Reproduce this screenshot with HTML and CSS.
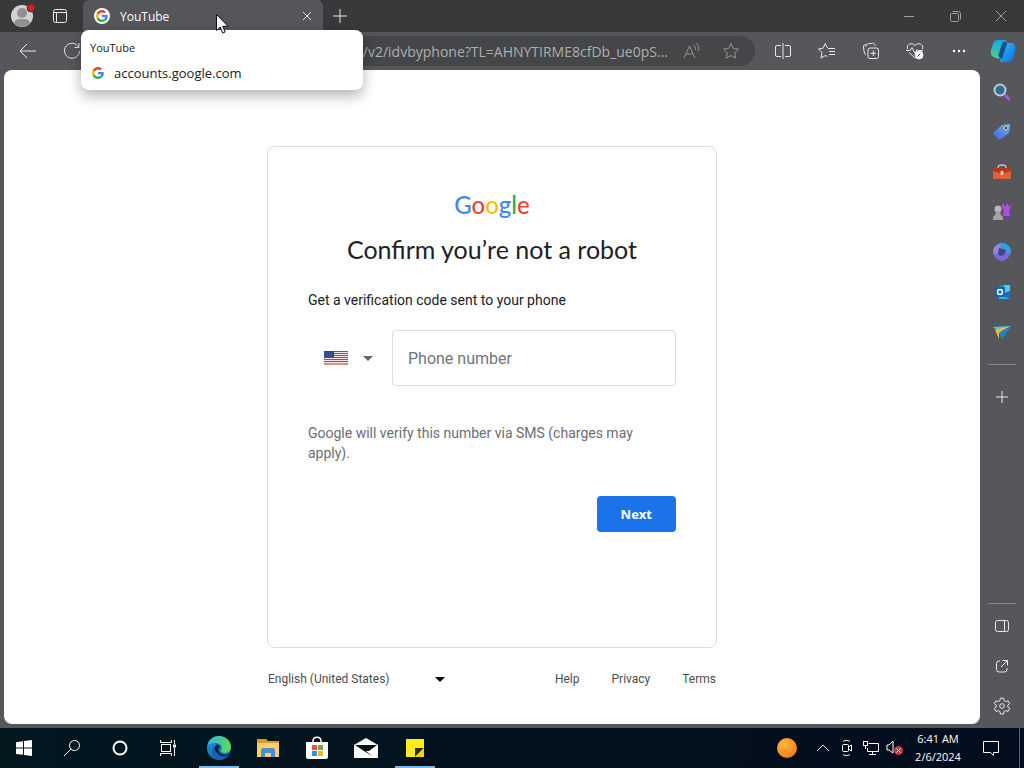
FILE: index.html
```html
<!DOCTYPE html>
<html lang="en">
<head>
  <meta charset="UTF-8">
  <title>YouTube</title>
  <meta name="viewport" content="width=device-width, initial-scale=1.0">
  <link rel="stylesheet" href="styles.css">
</head>
<body>

  <svg class="defs" aria-hidden="true">
    <defs>
      <symbol id="g-icon" viewBox="0 0 48 48">
        <path fill="#EA4335" d="M24 9.5c3.54 0 6.71 1.22 9.21 3.6l6.85-6.85C35.9 2.38 30.47 0 24 0 14.62 0 6.51 5.38 2.56 13.22l7.98 6.19C12.43 13.72 17.74 9.5 24 9.5z"/>
        <path fill="#4285F4" d="M46.98 24.55c0-1.57-.15-3.09-.38-4.55H24v9.02h12.94c-.58 2.96-2.26 5.48-4.78 7.18l7.73 6c4.51-4.18 7.09-10.36 7.09-17.65z"/>
        <path fill="#FBBC05" d="M10.53 28.59c-.48-1.45-.76-2.99-.76-4.59s.27-3.14.76-4.59l-7.98-6.19C.92 16.46 0 20.12 0 24c0 3.88.92 7.54 2.56 10.78l7.97-6.19z"/>
        <path fill="#34A853" d="M24 48c6.48 0 11.93-2.13 15.89-5.81l-7.73-6c-2.15 1.45-4.92 2.3-8.16 2.3-6.26 0-11.57-4.22-13.47-9.91l-7.98 6.19C6.51 42.62 14.62 48 24 48z"/>
      </symbol>
      <linearGradient id="edge-blue" x1="0" y1="0" x2="1" y2="1"><stop offset="0" stop-color="#1b9de2"/><stop offset="1" stop-color="#0c4f9e"/></linearGradient>
      <linearGradient id="edge-green" x1="0" y1="0" x2="1" y2="0"><stop offset="0" stop-color="#2fb4e8"/><stop offset="1" stop-color="#62d94e"/></linearGradient>
      <linearGradient id="co-left" x1="0" y1="0" x2="0" y2="1"><stop offset="0" stop-color="#19a5ea"/><stop offset="1" stop-color="#4ed08b"/></linearGradient>
      <linearGradient id="co-right" x1="0" y1="0" x2="1" y2="1"><stop offset="0" stop-color="#2cc3f6"/><stop offset="1" stop-color="#1267e4"/></linearGradient>
      <linearGradient id="tag-fill" x1="0" y1="1" x2="1" y2="0"><stop offset="0" stop-color="#3c62d8"/><stop offset="1" stop-color="#74b3ff"/></linearGradient>
      <radialGradient id="sun" cx=".35" cy=".3" r=".8"><stop offset="0" stop-color="#ffb640"/><stop offset="1" stop-color="#f07a16"/></radialGradient>
    </defs>
  </svg>

  <!-- tab strip -->
  <header class="titlebar">
    <button class="profile" aria-label="Profile">
      <svg width="28" height="26" viewBox="0 0 28 26">
        <circle cx="12" cy="13" r="11" fill="#d3d2d0"/>
        <circle cx="12" cy="10" r="5" fill="#918f8f"/>
        <path d="M4 20c1-4 4-4 8-4s7 0 8 4c-4 5-12 5-16 0z" fill="#918f8f"/>
        <circle cx="21" cy="5" r="4" fill="#e01b1b" stroke="#38393b"/>
      </svg>
    </button>
    <button class="workspaces" aria-label="Tab actions">
      <svg class="line" width="16" height="16" viewBox="0 0 16 16"><rect x="1.500" y="1.500" width="13" height="13" rx="2"/><path d="M2 4.500h12M4.500 4.500v10"/></svg>
    </button>
    <div class="tab">
      <span class="favicon"><svg width="12" height="12"><use href="#g-icon"/></svg></span>
      <span class="tab-title">YouTube</span>
      <button class="tab-close" aria-label="Close tab">
        <svg class="line" width="10" height="10" viewBox="0 0 10 10"><path d="M1 1l8 8M9 1l-8 8"/></svg>
      </button>
    </div>
    <button class="new-tab" aria-label="New tab">
      <svg class="line" width="14" height="14" viewBox="0 0 14 14"><path d="M7 0v14M0 7h14"/></svg>
    </button>
    <div class="window-buttons">
      <button aria-label="Minimize"><svg class="line" width="10" height="10" viewBox="0 0 10 10"><path d="M0 5.500h10"/></svg></button>
      <button aria-label="Restore"><svg class="line" width="11" height="11" viewBox="0 0 11 11"><rect x=".5" y="2.500" width="8" height="8" rx="1"/><path d="M2.500 .5h6a2 2 0 0 1 2 2v6"/></svg></button>
      <button aria-label="Close"><svg class="line" width="12" height="12" viewBox="0 0 12 12"><path d="M1 1l10 10M11 1L1 11"/></svg></button>
    </div>
  </header>

  <!-- toolbar -->
  <nav class="toolbar">
    <button aria-label="Back"><svg class="line" width="18" height="16" viewBox="0 0 18 16"><path d="M17 8H1.500M8 1L1 8l7 7"/></svg></button>
    <button aria-label="Refresh"><svg class="line" width="18" height="18" viewBox="0 0 18 18"><path d="M15.500 5A7.500 7.500 0 1 0 16.500 9M16 1v4.500h-4.500"/></svg></button>
    <div class="address">
      <input type="text" aria-label="Address" value="up/v2/idvbyphone?TL=AHNYTIRME8cfDb_ue0pS...">
      <button aria-label="Read aloud"><svg class="line" width="18" height="16" viewBox="0 0 18 16"><path d="M1 15L6.500 3 12 15M3 11h7M10.500 2c1.500 1 2 2.500 2 5M13 0c2.500 2 3.500 5 2.500 8"/></svg></button>
      <button aria-label="Add to favorites"><svg class="line" width="18" height="18" viewBox="0 0 18 18"><path d="M9 1.500l2.300 4.900 5.200.7-3.800 3.700 1 5.300L9 13.500l-4.700 2.600 1-5.300L1.500 7.100l5.200-.7z"/></svg></button>
    </div>
    <button aria-label="Split screen"><svg class="line" width="16" height="16" viewBox="0 0 16 16"><path d="M8 0v16M6 2.500H2a1.500 1.500 0 0 0-1.500 1.500v8A1.500 1.500 0 0 0 2 13.500h4M10 2.500h4a1.500 1.500 0 0 1 1.500 1.500v8a1.500 1.500 0 0 1-1.500 1.500h-4"/></svg></button>
    <button aria-label="Favorites"><svg class="line" width="18" height="18" viewBox="0 0 18 18"><path d="M10 6.500h7M11 9.500h6M11 12.500h6M9.500 6L7.200 1.500 5.200 6.200l-4.700.7L4 10.500l-1 5.500 4.500-2.500 2 1"/></svg></button>
    <button aria-label="Collections"><svg class="line" width="18" height="18" viewBox="0 0 18 18"><rect x="6" y="6" width="10.500" height="10.500" rx="2"/><path d="M11.300 8.500v5.500M8.500 11.300H14M4 12.500C2 12 2.500 10 2 9L1.500 5C1.300 3.500 2 3 3 3l1-.3M4 5c-.2-1.700 0-2.500 1.500-3l5-.8c1.500-.2 2.200.7 2.500 2L13.300 4"/></svg></button>
    <button aria-label="Browser essentials"><svg class="line" width="18" height="18" viewBox="0 0 18 18"><path d="M1.500 7C0 2 6 0 9 3.500 12 0 18 2 16.500 7M0 8.500h4l2-3 3 6 2-4 1 1h5M3 10.500l6 5.500"/><circle cx="13" cy="13" r="4" fill="#fff"/><path class="check" d="M11.500 14.500l3-3"/></svg></button>
    <button aria-label="Settings and more"><svg width="14" height="4" viewBox="0 0 14 4" fill="#fff"><circle cx="2" cy="2" r="1.200"/><circle cx="7" cy="2" r="1.200"/><circle cx="12" cy="2" r="1.200"/></svg></button>
    <button class="copilot" aria-label="Copilot"><svg width="26" height="24" viewBox="0 0 26 24"><path d="M8 1h7c2 0 1 1 0 5l-3 10c-1 3-3 4-6 3C2 18 0 15 1 11L3 5c1-3 2-4 5-4z" fill="url(#co-left)"/><path d="M18 4h3c4 0 5 4 4 8l-2 7c-1 3-2 4-5 4h-7c-2 0-1-2 0-5l3-10c1-3 2-4 4-4z" fill="url(#co-right)"/><path d="M14 2l3 3-5 15-4-3 4-12z" fill="#184f8c"/></svg></button>
  </nav>

  <div class="tooltip" role="tooltip">
    <div class="tooltip-title">YouTube</div>
    <div class="tooltip-site"><svg width="12" height="12"><use href="#g-icon"/></svg>accounts.google.com</div>
  </div>

  <div class="window">
    <main class="page">
      <form class="card" onsubmit="return false">
        <div class="logo" aria-label="Google"><span class="blue">G</span><span class="red">o</span><span class="yellow">o</span><span class="blue">g</span><span class="green">l</span><span class="red">e</span></div>
        <h1>Confirm you’re not a robot</h1>
        <p class="lead">Get a verification code sent to your phone</p>
        <div class="phone">
          <div class="country">
            <svg width="24" height="14" viewBox="0 0 24 14">
              <rect width="24" height="14" fill="#f3e6ea"/>
              <path d="M0 .5h24M0 2.500h24M0 4.500h24M0 6.500h24M0 8.500h24M0 10.500h24M0 13h24" stroke="#c8354d"/>
              <rect width="10" height="7" fill="#31477f"/>
              <path d="M1 2h8M1 4h8M1 6h8" stroke="#7181aa" stroke-width=".6" stroke-dasharray="1 1"/>
            </svg>
            <svg width="10" height="5" viewBox="0 0 10 5" fill="#5f6368"><path d="M0 0h10L5 5z"/></svg>
            <select aria-label="Country"><option value="us"></option></select>
          </div>
          <input type="tel" aria-label="Phone number" placeholder="Phone number">
        </div>
        <p class="note">Google will verify this number via SMS (charges may apply).</p>
        <button class="next" type="submit">Next</button>
      </form>
      <footer class="footer">
        <div class="language">
          <select aria-label="Language"><option>English (United States)</option></select>
          <svg width="10" height="5" viewBox="0 0 10 5"><path d="M0 0h10L5 5z"/></svg>
        </div>
        <div class="links">
          <a href="#">Help</a>
          <a href="#">Privacy</a>
          <a href="#">Terms</a>
        </div>
      </footer>
    </main>

    <aside class="sidebar">
      <button aria-label="Search"><svg width="20" height="20" viewBox="0 0 20 20"><path d="M11 11l6 6" stroke="#a958d8" stroke-width="3" stroke-linecap="round"/><circle cx="8" cy="8" r="5.500" fill="#2d6e91" stroke="#b9cdd8" stroke-width="2"/></svg></button>
      <button aria-label="Shopping"><svg width="20" height="20" viewBox="0 0 20 20"><path d="M10 3l7-1c1 0 1 1 1 2l-1 7-8 6c-1 1-2 1-3 0l-4-4c-1-1-1-2 0-3z" fill="url(#tag-fill)"/><circle cx="14" cy="6" r="1.800" fill="#26456f" stroke="#e4d667"/></svg></button>
      <button aria-label="Tools"><svg width="20" height="20" viewBox="0 0 20 20"><path d="M6 7c0-4 1-4 4-4s4 0 4 4" fill="none" stroke="#c8c8c8" stroke-width="1.500"/><rect x="1" y="6" width="18" height="11" rx="1.500" fill="#e0603a"/><path d="M1 9l9 3 9-3V6H1z" fill="#b93725"/><rect x="8.500" y="9" width="3" height="4" rx="1" fill="#f4c8a0"/></svg></button>
      <button aria-label="Games"><svg width="20" height="20" viewBox="0 0 20 20"><path d="M10 2h2v2h2V2h2v2h2V2h1l-1 5-1 1 1 6h-7l1-6-2-2z" fill="#ad4be3"/><path d="M12 14h7v2h-8z" fill="#7b31b5"/><circle cx="6" cy="7" r="3.500" fill="#b8b7b6"/><path d="M4 9h4c0 3 1 4 3 6v3H1v-3c2-2 3-3 3-6z" fill="#a4a3a2"/></svg></button>
      <button aria-label="Microsoft 365"><svg width="20" height="20" viewBox="0 0 20 20"><path d="M10 1C5 1 1 5 1 10c0 1 0 2 1 3l9-3z" fill="#8f86dc"/><path d="M8 1c6-1 11 4 11 9l-1 3-8-4z" fill="#2f9fe8"/><path d="M1 11c3 2 8 1 10-4l7 5c-1 4-5 7-9 7-4-1-7-4-8-8z" fill="#7a6bd6"/><path d="M7 6l7 2-2 5-4 1-2-2z" fill="#3f4682"/></svg></button>
      <button aria-label="Outlook"><svg width="20" height="20" viewBox="0 0 20 20"><rect x="7" y="3" width="11" height="14" rx="1" fill="#1683ce"/><path d="M12 3h6v7h-6z" fill="#51c8ef"/><path d="M7 12l11-3v8H7z" fill="#39acea"/><path d="M18 9v8l-9-4z" fill="#1b6bb7"/><rect x="3" y="5" width="10" height="10" rx="1" fill="#0768b7"/><circle cx="8" cy="10" r="2.500" fill="none" stroke="#fff" stroke-width="1.500"/></svg></button>
      <button aria-label="Drop"><svg width="20" height="20" viewBox="0 0 20 20"><path d="M1 5l18-1-9 13-3-7z" fill="#258bd1"/><path d="M1 5l18-1-12 6z" fill="#55c0dc"/><path d="M3 8l14-4-10 7v6z" fill="#f3b936"/><path d="M8 10l11-6-9 13z" fill="#1686cf"/></svg></button>
      <hr>
      <button aria-label="Customize"><svg class="line" width="12" height="12" viewBox="0 0 12 12"><path d="M6 0v12M0 6h12"/></svg></button>
      <hr class="before-tools">
      <button aria-label="Hide sidebar"><svg class="line" width="14" height="12" viewBox="0 0 14 12"><rect x=".5" y=".5" width="13" height="11" rx="2"/><path d="M9.500 1v10"/></svg></button>
      <button aria-label="Open link"><svg class="line" width="14" height="14" viewBox="0 0 14 14"><path d="M5 2H4a2.500 2.500 0 0 0-2.500 2.500v6A2.500 2.500 0 0 0 4 13h5.500a2.500 2.500 0 0 0 2.500-2.500V9M7.500 1.500h5v5M12.500 1.500L6 8"/></svg></button>
      <button aria-label="Settings"><svg class="line" width="18" height="18" viewBox="0 0 18 18"><path d="M7.400 1.200h3.200l.5 2.500 1.600.9 2.400-.8 1.600 2.800-1.900 1.600v1.800l1.900 1.600-1.600 2.800-2.400-.8-1.600.9-.5 2.500H7.400l-.5-2.500-1.600-.9-2.400.8-1.600-2.800L3.200 10V8.200L1.300 6.600l1.600-2.800 2.400.8 1.600-.9z"/><circle cx="9" cy="9" r="2.300"/></svg></button>
    </aside>
  </div>

  <!-- desktop taskbar -->
  <div class="taskbar">
    <button aria-label="Start"><svg width="16" height="16" viewBox="0 0 16 16" fill="#fff"><path d="M0 2.200L7 1.300v6.300H0zM8 1.100L16 0v7.600H8zM0 8.500h7v6.300l-7-.9zM8 8.500h8V16l-8-1.100z"/></svg></button>
    <button aria-label="Search"><svg class="line" width="18" height="18" viewBox="0 0 18 18"><circle cx="11.500" cy="6.500" r="5"/><path d="M8 10l-7 7"/></svg></button>
    <button aria-label="Cortana"><svg width="16" height="16" viewBox="0 0 16 16"><circle cx="8" cy="8" r="6.500" fill="none" stroke="#fff" stroke-width="2"/></svg></button>
    <button aria-label="Task view"><svg class="line" width="17" height="16" viewBox="0 0 17 16"><rect x="1.500" y="4.500" width="9" height="7"/><path d="M.5 0v2.500h11V0M.5 16v-2.500h11V16M14.500 0v4M14.500 8v8"/><rect x="13.500" y="5" width="2" height="2" fill="#fff"/></svg></button>
    <div class="apps">
      <button class="running" aria-label="Microsoft Edge"><svg width="26" height="26" viewBox="0 0 26 26"><circle cx="13" cy="13" r="12" fill="url(#edge-blue)"/><path d="M1.500 10C3 4 8 1 13 1c7 0 12 5 12 11 0 4-3 6-6 6-3 0-5-1-4-3 2-3 0-7-5-7-4 0-7 1-8.500 2z" fill="url(#edge-green)"/><path d="M10 10c-3 3-2 10 4 12 4 1 7 0 9-3-3 2-8 1-10-2-1-2-1-4 1-5-1-2-2-3-4-2z" fill="#06213a"/><path d="M8 11c-4 6-1 12 5 14 4 0 8-2 10-5-4 2-8 2-11-1s-4-5-4-8z" fill="#1360b5"/></svg></button>
      <button aria-label="File Explorer"><svg width="22" height="20" viewBox="0 0 22 20"><path d="M0 1h9l2 2h11v5H0z" fill="#dc9a29"/><path d="M0 5h22v14H0z" fill="#f5cf70"/><path d="M4 19v-7c0-1 1-2 2-2h10c1 0 2 1 2 2v7h-4v-4H8v4z" fill="#4b91c9"/></svg></button>
      <button aria-label="Microsoft Store"><svg width="24" height="24" viewBox="0 0 24 24"><path d="M8 7V5c0-5 8-5 8 0v2" fill="none" stroke="#fff" stroke-width="1.500"/><path d="M1 6h22v15c0 1-1 2-2 2H3c-1 0-2-1-2-2z" fill="#fff"/><path d="M7 9h5v5H7z" fill="#ef5435"/><path d="M13 9h5v5h-5z" fill="#6fae35"/><path d="M7 15h5v5H7z" fill="#219bd8"/><path d="M13 15h5v5h-5z" fill="#f2b31c"/></svg></button>
      <button aria-label="Mail"><svg width="24" height="20" viewBox="0 0 24 20"><path d="M0 7l12-7 12 7v13H0z" fill="#fff"/><path d="M1 7h22l-8 6 3 5-8-5z" fill="#03131c"/><path d="M12 13l6 5-2-5z" fill="#fff"/></svg></button>
      <button class="running" aria-label="Sticky Notes"><svg width="20" height="20" viewBox="0 0 20 20"><path d="M1 1h18v18H1z" fill="#ffeb1c"/><path d="M10 10h9l-9 9z" fill="#302a14"/><path d="M19 10v9h-9z" fill="#f5d60c"/></svg></button>
    </div>
    <div class="tray">
      <svg class="weather" width="22" height="22" viewBox="0 0 22 22"><circle cx="11" cy="11" r="10" fill="url(#sun)"/></svg>
      <button aria-label="Show hidden icons"><svg class="line" width="12" height="8" viewBox="0 0 12 8"><path d="M0 7l6-6 6 6"/></svg></button>
      <button aria-label="Camera"><svg class="line" width="14" height="18" viewBox="0 0 14 18"><rect x="2.500" y="5.500" width="6" height="7" rx="1"/><path d="M8.500 8l3-2v6l-3-2M3 2.500c2-1.500 5-1.500 7 0M3 15.500c2 1.500 5 1.500 7 0"/></svg></button>
      <button aria-label="Network"><svg class="line" width="16" height="16" viewBox="0 0 16 16"><path d="M5.500 3.500h10v8h-11V8M9.500 11.500v3M6 14.500h7"/><rect x=".5" y="1.500" width="4" height="4"/><path d="M2.500 5.500V9"/></svg></button>
      <button aria-label="Volume muted"><svg width="18" height="16" viewBox="0 0 18 16"><path d="M1 5h2l4-4v12L3 10H1z" fill="none" stroke="#fff"/><circle cx="12.500" cy="10.500" r="4.500" fill="#cc3340"/><path d="M10.500 8.500l4 4M14.500 8.500l-4 4" stroke="#fff"/></svg></button>
      <button class="clock"><span>6:41 AM</span><span>2/6/2024</span></button>
      <button class="notifications" aria-label="Notifications"><svg class="line" width="18" height="18" viewBox="0 0 18 18"><path d="M1.500 2.500h15v11h-5v3l-3-3h-7z"/></svg></button>
    </div>
  </div>

  <svg class="cursor" width="13" height="20" viewBox="0 0 13 20"><path d="M.5 .5v16l3.700-3.500 2.500 6 2.500-1-2.500-5.700H12z" fill="#fff" stroke="#111"/></svg>

</body>
</html>
```

FILE: styles.css
```css
* {
  box-sizing: border-box;
}
body {
  margin: 0;
  min-height: 100vh;
  display: flex;
  flex-direction: column;
  background: #55575a;
  color: #202124;
  font-family: Roboto, sans-serif;
}
button {
  display: flex;
  align-items: center;
  justify-content: center;
  flex-shrink: 0;
  padding: 0;
  border: none;
  background: none;
  color: #fff;
  font: inherit;
  cursor: pointer;
}
svg {
  display: block;
  flex-shrink: 0;
}
.defs {
  position: absolute;
  width: 0;
  height: 0;
}
.line {
  fill: none;
  stroke: #e8e8e8;
}

/* tab strip */
.titlebar {
  display: flex;
  height: 32px;
  background: #38393b;
  font-family: "Open Sans", sans-serif;
}
.profile {
  width: 48px;
}
.workspaces {
  width: 24px;
}
.tab {
  display: flex;
  align-items: center;
  width: 240px;
  margin-left: 11px;
  padding: 0 11px;
  background: #55565a;
  border-radius: 6px 6px 0 0;
}
.favicon {
  padding: 2px;
  border-radius: 50%;
  background: #fff;
}
.tab-title {
  flex: 1;
  margin-left: 10px;
  color: #fff;
  font-size: 12px;
}
.tab-close {
  width: 10px;
}
.new-tab {
  width: 34px;
}
.window-buttons {
  display: flex;
  margin-left: auto;
}
.window-buttons button {
  width: 46px;
}
.window-buttons .line {
  stroke: #a0a0a2;
}

/* toolbar */
.toolbar {
  display: flex;
  align-items: center;
  height: 38px;
  padding-left: 6px;
}
.toolbar button {
  width: 44px;
  height: 30px;
}
.toolbar .copilot {
  width: 43px;
}
.address {
  flex: 1;
  display: flex;
  align-items: center;
  height: 30px;
  margin: 0 6px 0 5px;
  padding-right: 5px;
  border-radius: 15px;
  background: #444648;
}
.address input {
  flex: 1;
  min-width: 0;
  margin-right: 4px;
  padding: 0;
  border: none;
  outline: none;
  background: none;
  color: #acaeb0;
  font: 14px "Open Sans", sans-serif;
  text-align: right;
}
.address button {
  width: 39px;
}
.address .line {
  stroke: #929496;
}
.line .check {
  stroke: #55575a;
}

/* tab hover card */
.tooltip {
  position: absolute;
  top: 30px;
  left: 81px;
  z-index: 2;
  width: 282px;
  height: 60px;
  padding: 9px;
  border-radius: 8px;
  background: #fff;
  box-shadow: 0 6px 14px rgba(0, 0, 0, 0.3);
  color: #222;
  font-family: "Open Sans", sans-serif;
}
.tooltip-title {
  font-size: 11px;
  line-height: 18px;
}
.tooltip-site {
  display: flex;
  align-items: center;
  gap: 10px;
  margin-top: 6px;
  padding-left: 2px;
  font-size: 13px;
  line-height: 20px;
}
.cursor {
  position: absolute;
  top: 14px;
  left: 216px;
  z-index: 3;
}

/* page */
.window {
  flex: 1;
  display: flex;
}
.page {
  flex: 1;
  display: flex;
  flex-direction: column;
  align-items: center;
  margin: 0 0 4px 4px;
  padding-top: 76px;
  border-radius: 8px;
  background: #fff;
}
.card {
  width: 100%;
  max-width: 450px;
  min-height: 502px;
  padding: 46px 40px 36px;
  border: 1px solid #dadce0;
  border-radius: 8px;
}
.logo {
  font-family: Lato, sans-serif;
  font-size: 24px;
  font-weight: 500;
  line-height: 24px;
  text-align: center;
}
.blue {
  color: #4285f4;
}
.red {
  color: #ea4335;
}
.yellow {
  color: #fbbc05;
}
.green {
  color: #34a853;
}
h1 {
  margin: 16px 0 0;
  font-family: Lato, sans-serif;
  font-size: 25px;
  font-weight: 400;
  line-height: 32px;
  text-align: center;
}
.lead {
  margin: 25px 0 20px;
  font-size: 14px;
  line-height: 20px;
}
.phone {
  display: flex;
  height: 56px;
}
.country {
  position: relative;
  display: flex;
  align-items: center;
  gap: 15px;
  width: 84px;
  padding-left: 16px;
}
.country select {
  position: absolute;
  inset: 0;
  width: 100%;
  border: none;
  appearance: none;
  background: none;
}
.phone input {
  flex: 1;
  min-width: 0;
  padding: 0 15px;
  border: 1px solid #dadce0;
  border-radius: 4px;
  font: 16px Roboto, sans-serif;
}
.phone input::placeholder {
  color: #70757a;
}
.note {
  margin: 37px 0 33px;
  color: #6b6e72;
  font-size: 14px;
  line-height: 20px;
}
.next {
  height: 36px;
  margin-left: auto;
  padding: 0 24px;
  border-radius: 4px;
  background: #1a73e8;
  font: bold 13px "Open Sans", sans-serif;
}
.footer {
  display: flex;
  justify-content: space-between;
  align-items: center;
  width: 100%;
  max-width: 450px;
  margin-top: 20px;
  padding: 0 1px;
  color: #4a4d51;
  font-size: 12px;
  line-height: 22px;
}
.language {
  display: flex;
  align-items: center;
  width: 177px;
}
.language select {
  flex: 1;
  padding: 0;
  border: none;
  appearance: none;
  background: none;
  color: inherit;
  font: inherit;
}
.links {
  display: flex;
  gap: 32px;
}
.links a {
  color: inherit;
  text-decoration: none;
}

/* sidebar */
.sidebar {
  display: flex;
  flex-direction: column;
  width: 44px;
  padding: 2px 0;
}
.sidebar button {
  height: 40px;
}
.sidebar hr {
  width: 28px;
  height: 1px;
  margin: 12px auto;
  border: none;
  background: #85898b;
}
.sidebar .before-tools {
  margin: auto auto 2px;
}

/* taskbar */
.taskbar {
  display: flex;
  height: 40px;
  background: linear-gradient(90deg, #03171f, #030d1d);
  font-family: "Open Sans", sans-serif;
}
.taskbar > button {
  width: 48px;
}
.taskbar .line {
  stroke: #fff;
}
.apps {
  display: flex;
  margin-left: 2px;
}
.apps button {
  width: 49px;
}
.apps .running {
  background: linear-gradient(#76b9ed, #76b9ed) center bottom / 40px 2px no-repeat;
}
.tray {
  display: flex;
  align-items: center;
  margin-left: auto;
  padding-right: 4px;
}
.tray button {
  width: 24px;
  height: 40px;
}
.weather {
  margin-right: 13px;
}
.tray .clock {
  flex-direction: column;
  width: 48px;
  margin-left: 7px;
  font-size: 11px;
  line-height: 18px;
}
.tray .notifications {
  width: 58px;
  border-right: 1px solid #5b6570;
}
```
